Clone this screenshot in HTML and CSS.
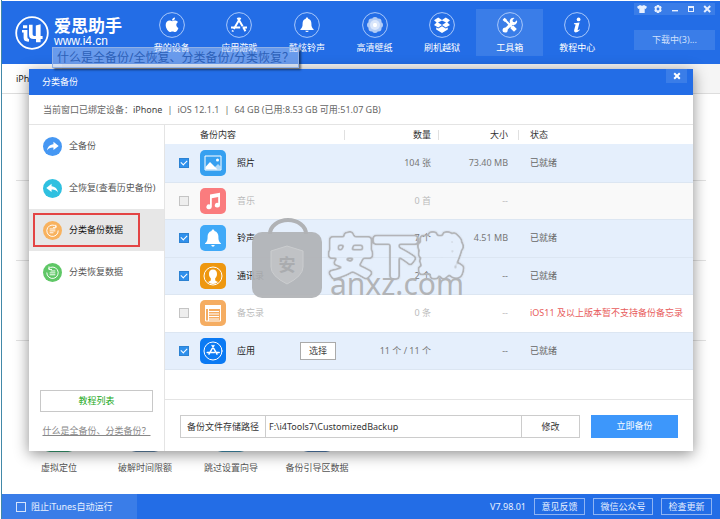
FILE: index.html
```html
<!DOCTYPE html>
<html lang="zh-CN">
<head>
<meta charset="utf-8">
<meta name="viewport" content="width=device-width, initial-scale=1">
<title>爱思助手</title>
<link rel="stylesheet" href="styles.css">
</head>
<body>
<div class="app">
  <header class="header">
    <div class="brand">
      <svg class="brand-logo" viewBox="0 0 34 34" aria-hidden="true">
        <circle cx="17" cy="17" r="15.8" fill="none" stroke="#fff" stroke-width="1.8"/>
        <path d="M8 9.2h4.2v3H8zM7 14h5.4v7.200q0 1.600 1.600 1.800v2.600q-5.400.4-5.400-3.800v-5.200H7z" fill="#fff"/>
        <path d="M14 8.800h3.600v9.400q0 1.800 1.800 1.800h1.400V9.600l4.800-1.400V20h2v3h-2v3.200h-4.600V23h-2.400q-4.600 0-4.600-4.600z" fill="#fff"/>
      </svg>
      <div class="brand-text">
        <strong>爱思助手</strong>
        <span>www.i4.cn</span>
      </div>
    </div>
    <nav class="nav">
      <a href="#device"><svg viewBox="0 0 26 26" aria-hidden="true"><circle class="ring" cx="13" cy="13" r="12.400"/><path d="M16 5.400c.2 1.700-1.300 3.300-3 3.200-.2-1.600 1.300-3.100 3-3.200zM19.400 16c-.6 1.800-1.900 4-3.300 4-1 0-1.500-.6-2.600-.6s-1.700.6-2.600.6c-1.700 0-4.200-3.900-4.200-7 0-2.800 1.800-4.400 3.700-4.400 1.100 0 2.100.7 2.800.7.800 0 1.900-.8 3.300-.7 1 .1 1.900.6 2.500 1.400-2.500 1.600-2 5 .4 6z"/></svg><span>我的设备</span></a>
      <a href="#apps"><svg viewBox="0 0 26 26" aria-hidden="true"><circle class="ring" cx="13" cy="13" r="12.400"/><path class="line" d="M14.400 5.800L7.800 17M11.600 5.800l5 8.400M17.400 15.600l2 3.600M5 15.600h9.200M16.600 15.600H21M7 18.400l-.6 1.200"/></svg><span>应用游戏</span></a>
      <a href="#ring"><svg viewBox="0 0 26 26" aria-hidden="true"><circle class="ring" cx="13" cy="13" r="12.400"/><path d="M13 5.600c.8 0 1.200.5 1.200 1.200 2.400.7 3.200 2.500 3.200 4.700 0 3.400.6 4.300 2.200 5.700v.8H6.400v-.8c1.600-1.400 2.200-2.300 2.200-5.700 0-2.200.8-4 3.200-4.700 0-.7.4-1.200 1.200-1.200zM11.200 18.700h3.600q-.4 1.300-1.800 1.300t-1.800-1.300z"/></svg><span>酷炫铃声</span></a>
      <a href="#wall"><svg viewBox="0 0 26 26" aria-hidden="true"><circle class="ring" cx="13" cy="13" r="12.400"/><g opacity=".65"><circle cx="13" cy="8" r="3"/><circle cx="16.500" cy="9.500" r="3"/><circle cx="18" cy="13" r="3"/><circle cx="16.500" cy="16.500" r="3"/><circle cx="13" cy="18" r="3"/><circle cx="9.500" cy="16.500" r="3"/><circle cx="8" cy="13" r="3"/><circle cx="9.500" cy="9.500" r="3"/></g><circle cx="13" cy="13" r="5" opacity=".5"/><circle cx="13" cy="13" r="2.200"/></svg><span>高清壁纸</span></a>
      <a href="#flash"><svg viewBox="0 0 26 26" aria-hidden="true"><circle class="ring" cx="13" cy="13" r="12.400"/><path d="M9.200 5.600L13 8l3.800-2.400L21 8.300l-2.600 2.300L21 12.900l-4.200 2.500L13 12.900l-3.800 2.500L5 12.900l2.600-2.300L5 8.300zM13 8.400l-4 2.200 4 2.400 4-2.400zM7.200 15.400l2 1.200L13 14.200l3.800 2.400 2-1.200v2.200L13 21l-5.800-3.400z" fill-rule="evenodd"/></svg><span>刷机越狱</span></a>
      <a href="#tools" class="current"><svg viewBox="0 0 26 26" aria-hidden="true"><circle class="ring" cx="13" cy="13" r="12.400"/><path class="thick" d="M14.600 14.600l3.800 3.800"/><path class="line" d="M6.800 6.800l8 8"/><path class="mid" d="M6.600 6.800l2.400 2.200M8 18.200l7.400-7.400"/><path d="M19.900 8.200a3.700 3.700 0 1 1-2.400-2.300l-2 2.100.4 1.800 1.800.5zM8.200 15.400a2.600 2.600 0 1 0 2.500 2.600l-1-1.800z"/></svg><span>工具箱</span></a>
      <a href="#help"><svg viewBox="0 0 26 26" aria-hidden="true"><circle class="ring" cx="13" cy="13" r="12.400"/><circle cx="14.600" cy="7.400" r="1.900"/><path d="M10 11.200l5.600-.7-1.900 7.100q-.2 1 .5.700l1.300-1 .4.700q-2 2.400-4.200 2.400-2-.1-1.600-2.100l1.400-5.200q.2-.9-.5-.9h-1.100z"/></svg><span>教程中心</span></a>
    </nav>
    <div class="header-side">
      <div class="window-tools">
        <button type="button" aria-label="皮肤"><svg viewBox="0 0 12 12"><path d="M4 2q2 1.400 4 0l3 1.700-1.200 2.300-1.100-.5V10H3.300V5.500L2.200 6 1 3.700z"/></svg></button>
        <button type="button" aria-label="设置"><svg viewBox="0 0 12 12"><path d="M6 2l1.100.1.500 1.100 1.200-.1.900 1.500-.7 1.400.7 1.400-.9 1.500-1.200-.1-.5 1.100H4.900l-.5-1.100-1.200.1-.9-1.500L3 6l-.7-1.400.9-1.500 1.200.1.500-1.100zM6 4.600a1.400 1.400 0 1 0 0 2.800 1.400 1.400 0 0 0 0-2.800z" fill-rule="evenodd"/></svg></button>
        <button type="button" aria-label="最小化"><svg viewBox="0 0 12 12"><path d="M3 7h6v1.400H3z"/></svg></button>
        <button type="button" aria-label="最大化"><svg viewBox="0 0 12 12"><path d="M3 3h6v6H3zm1 2v3h4V5z" fill-rule="evenodd"/></svg></button>
        <button type="button" aria-label="关闭"><svg viewBox="0 0 12 12"><path class="line" d="M3.200 3l6 6M9.200 3l-6 6"/></svg></button>
      </div>
      <button type="button" class="download">下载中(3)...</button>
    </div>
  </header>

  <main class="page">
    <div class="tabs"><a href="#iphone">iPhone</a></div>
    <div class="sections">
      <div class="section first"></div>
      <div class="section"></div>
      <div class="section"></div>
      <ul class="tools">
        <li><i class="tile green"></i>虚拟定位</li>
        <li><i class="tile steel"></i>破解时间限额</li>
        <li><i class="tile cyan"></i>跳过设置向导</li>
        <li><i class="tile blue"></i>备份引导区数据</li>
      </ul>
    </div>
  </main>

  <footer class="status">
    <label class="itunes"><input type="checkbox"> 阻止iTunes自动运行</label>
    <div class="status-end">
      <span>V7.98.01</span>
      <button type="button">意见反馈</button>
      <button type="button" class="wide">微信公众号</button>
      <button type="button">检查更新</button>
    </div>
  </footer>

  <section class="dialog" role="dialog" aria-labelledby="dialog-title">
    <div class="dialog-head">
      <h1 id="dialog-title">分类备份</h1>
      <button type="button" aria-label="关闭"><svg viewBox="0 0 12 12"><path class="line" d="M3.200 3.200l5.600 5.600M8.800 3.200L3.200 8.800"/></svg></button>
    </div>
    <p class="device">当前窗口已绑定设备：<b>iPhone</b><span>|</span>iOS 12.1.1<span>|</span>64 GB (已用:8.53 GB 可用:51.07 GB)</p>
    <div class="dialog-body">
      <aside class="side">
        <ul>
          <li><a href="#full-backup"><svg viewBox="0 0 20 20" aria-hidden="true"><circle cx="10" cy="10" r="10" fill="#4597f3"/><path d="M11 5l5.500 4.500L11 13.800v-2.600c-3-.2-5.200.8-6.700 3 .2-3.600 2.700-6.200 6.700-6.600z" fill="#fff"/></svg>全备份</a></li>
          <li><a href="#full-restore"><svg viewBox="0 0 20 20" aria-hidden="true"><circle cx="10" cy="10" r="10" fill="#2fc0e0"/><path d="M9 5L3.500 9.500 9 13.800v-2.600c3-.2 5.200.8 6.700 3-.2-3.600-2.700-6.200-6.700-6.600z" fill="#fff"/></svg>全恢复(查看历史备份)</a></li>
          <li class="selected"><a href="#sort-backup"><svg viewBox="0 0 20 20" aria-hidden="true"><circle cx="10" cy="10" r="10" fill="#f8b25e"/><path d="M14.500 6.300A6 6 0 1 0 16 10M13.500 4v3h-3M7 8.400h6M7 10.400h6M7 12.400h4" fill="none" stroke="#fff"/></svg>分类备份数据</a></li>
          <li><a href="#sort-restore"><svg viewBox="0 0 20 20" aria-hidden="true"><circle cx="10" cy="10" r="10" fill="#5fc766"/><path d="M5.500 6.300A6 6 0 1 1 4 10M6.300 3.600v3.200h3.200M8 8.400h5M7 10.400h6M7 12.400h6" fill="none" stroke="#fff"/></svg>分类恢复数据</a></li>
        </ul>
        <div class="side-end">
          <button type="button">教程列表</button>
          <a href="#what">什么是全备份、分类备份？</a>
        </div>
      </aside>
      <div class="content">
        <table>
          <colgroup><col class="c-check"><col class="c-name"><col class="c-count"><col class="c-size"><col></colgroup>
          <thead>
            <tr><th></th><th class="h-name">备份内容</th><th class="num">数量</th><th class="num size">大小</th><th class="state">状态</th></tr>
          </thead>
          <tbody>
            <tr class="on">
              <td class="check"><input type="checkbox" id="r1" checked></td>
              <td><div class="item"><svg viewBox="0 0 26 26" aria-hidden="true"><rect width="26" height="26" rx="5" fill="#36a0f0"/><path d="M5 6h16v14H5z" fill="none" stroke="#fff"/><circle cx="17.500" cy="10" r="1.500" fill="#fff"/><path d="M15 17l3-3 2.500 2.500v3H15z" fill="#fff" opacity=".6"/><path d="M5.500 17L10 12l7.500 7.500h-12z" fill="#fff"/></svg><label for="r1">照片</label></div></td>
              <td class="num">104 张</td><td class="num size">73.40 MB</td><td class="state">已就绪</td>
            </tr>
            <tr class="off muted">
              <td class="check"><input type="checkbox" id="r2" disabled></td>
              <td><div class="item"><svg viewBox="0 0 26 26" aria-hidden="true"><rect width="26" height="26" rx="5" fill="#fa7c7e"/><path d="M10 6.600l10-1.800v12.400a2.600 2.400 0 1 1-1.800-2.300V9l-6.400 1.200v8.600A2.700 2.400 0 1 1 10 16.500z" fill="#fff"/></svg><label for="r2">音乐</label></div></td>
              <td class="num">0 首</td><td class="num size">--</td><td></td>
            </tr>
            <tr class="on">
              <td class="check"><input type="checkbox" id="r3" checked></td>
              <td><div class="item"><svg viewBox="0 0 26 26" aria-hidden="true"><rect width="26" height="26" rx="5" fill="#3fa9f8"/><path d="M13 4.500c.9 0 1.400.6 1.400 1.400 2.900.8 4 3 4 5.600 0 4 .6 5.300 2.600 7v.5H5v-.5c2-1.700 2.600-3 2.600-7 0-2.600 1.100-4.800 4-5.600 0-.8.5-1.400 1.400-1.400zM11.200 20h3.600q-.4 1.800-1.800 1.800T11.200 20z" fill="#fff"/></svg><label for="r3">铃声</label></div></td>
              <td class="num">7 个</td><td class="num size">4.51 MB</td><td class="state">已就绪</td>
            </tr>
            <tr class="on">
              <td class="check"><input type="checkbox" id="r4" checked></td>
              <td><div class="item"><svg viewBox="0 0 26 26" aria-hidden="true"><rect width="26" height="26" rx="5" fill="#ee970f"/><circle cx="13" cy="13" r="9" fill="none" stroke="#fff"/><path d="M13 6.500c2.600 0 4 1.700 4 4.500 0 2-.8 3.500-1.800 4.300v1.800c.1 1.200 1.500 1.300 2.800 2-2.800 2.600-7.200 2.600-10 0 1.300-.7 2.700-.8 2.800-2v-1.800C9.800 14.500 9 13 9 11c0-2.800 1.400-4.500 4-4.500z" fill="#fff"/></svg><label for="r4">通讯录</label></div></td>
              <td class="num">2 个</td><td class="num size">--</td><td class="state">已就绪</td>
            </tr>
            <tr class="muted">
              <td class="check"><input type="checkbox" id="r5" disabled></td>
              <td><div class="item"><svg viewBox="0 0 26 26" aria-hidden="true"><rect width="26" height="26" rx="5" fill="#f5ad62"/><path d="M5.500 5.500h15v15.500h-15z" fill="none" stroke="#fff"/><path d="M5 5h16v4H5z" fill="#fff"/><path d="M8.500 9v12M8 11.500h11M8 14h11M8 16.500h11M8 19h11" stroke="#fff" fill="none"/></svg><label for="r5">备忘录</label></div></td>
              <td class="num">0 条</td><td class="num size">--</td><td class="state warn">iOS11 及以上版本暂不支持备份备忘录</td>
            </tr>
            <tr class="on">
              <td class="check"><input type="checkbox" id="r6" checked></td>
              <td><div class="item"><svg viewBox="0 0 26 26" aria-hidden="true"><rect width="26" height="26" rx="5" fill="#0b7af3"/><g fill="none" stroke="#fff" stroke-linecap="round"><circle cx="13" cy="13" r="9"/><path stroke-width="1.500" d="M13.900 7.500L9 16.200M12.100 7.500l4.900 8.700M7.200 14.500h7.200M16.400 14.500h2.800"/></g></svg><label for="r6">应用</label><button type="button">选择</button></div></td>
              <td class="num">11 个 / 11 个</td><td class="num size">--</td><td class="state">已就绪</td>
            </tr>
          </tbody>
        </table>
        <form class="save">
          <div class="path">
            <label for="path">备份文件存储路径</label>
            <input id="path" type="text" value="F:\i4Tools7\CustomizedBackup">
            <button type="button">修改</button>
          </div>
          <button type="button" class="primary">立即备份</button>
        </form>
      </div>
    </div>
  </section>

  <div class="tip" role="tooltip">什么是全备份/全恢复、分类备份/分类恢复？</div>

  <svg class="watermark" viewBox="0 0 216 84">
    <defs>
      <filter id="outline" x="-5%" y="-10%" width="110%" height="120%">
        <feGaussianBlur stdDeviation="1"/>
        <feComponentTransfer>
          <feFuncA type="table" tableValues="0 .3 1 1 .9 .4 0 0"/>
        </feComponentTransfer>
      </filter>
    </defs>
    <path d="M18 16a18 14 0 0 1 36 0" fill="none" stroke="#b0b2b5" stroke-width="4"/>
    <rect x="0" y="14" width="70" height="66" rx="10" fill="#b0b2b5" opacity=".92"/>
    <path d="M35 28l16 5v16q0 9-16 17-16-8-16-17V33z" fill="#c0c2c5" stroke="#cbcdcf"/>
    <text class="mark-badge" x="35" y="53" text-anchor="middle">安</text>
    <text class="mark-name" x="76" y="55" filter="url(#outline)">安下载</text>
    <text class="mark-site" x="78" y="77">anxz.com</text>
  </svg>
</div>
</body>
</html>
```
FILE: styles.css
```css
* {
  box-sizing: border-box;
}

body {
  margin: 0;
  background: #fff;
  color: #555;
  font: 9px/12px "Noto Sans", "Noto Sans CJK SC", sans-serif;
}

button,
input {
  margin: 0;
  padding: 0;
  border: 0;
  background: none;
  color: inherit;
  font: inherit;
}

a {
  color: inherit;
  text-decoration: none;
}

ul {
  margin: 0;
  padding: 0;
  list-style: none;
}

svg {
  display: block;
  flex: none;
}

.app {
  position: relative;
  display: flex;
  flex-direction: column;
  min-height: 100vh;
  margin-left: 1px;
  padding-top: 1px;
  border-left: 1px solid #4288a8;
}

/* Header */

.header {
  display: flex;
  height: 63px;
  background: #236de6;
  color: #fff;
}

.brand {
  display: flex;
  align-items: center;
  gap: 5px;
  width: 136px;
  padding-left: 13px;
}

.brand-logo {
  width: 34px;
}

.brand-text {
  display: flex;
  flex-direction: column;
}

.brand-text strong {
  font-size: 17px;
  font-weight: 700;
  line-height: 17px;
}

.brand-text span {
  font: 12px/14px "Liberation Sans", sans-serif;
}

.nav {
  display: flex;
  flex: 1;
  padding: 8px 0;
}

.nav a {
  display: flex;
  flex: 1;
  flex-direction: column;
  align-items: center;
  gap: 4px;
  padding-top: 3px;
}

.nav a.current {
  background: #3a7de8;
}

.nav svg {
  width: 26px;
  fill: #fff;
}

.nav .ring {
  fill: none;
  stroke: #a9c8fa;
}

.line,
.mid,
.thick {
  fill: none;
  stroke: #fff;
  stroke-width: 2;
}

.nav .mid {
  stroke-width: 3;
}

.nav .thick {
  stroke-width: 4;
}

.header-side {
  display: flex;
  flex-direction: column;
  gap: 15px;
  width: 109px;
  padding: 2px 5px 0 23px;
}

.window-tools {
  display: flex;
  justify-content: space-between;
  background: #3a7de8;
}

.window-tools button {
  flex: 1;
  height: 12px;
}

.window-tools svg {
  width: 12px;
  margin: 0 auto;
  fill: #e6efff;
}

.window-tools .line {
  fill: none;
  stroke: #e6efff;
  stroke-width: 2;
}

.download {
  height: 20px;
  background: #3a7de8;
  color: #d0e0fc;
}

/* Page behind the dialog */

.page {
  flex: 1;
}

.tabs {
  height: 30px;
  padding: 9px 14px;
  border-bottom: 1px solid #ddd;
  background: linear-gradient(90deg, #fff 60px, #f5f5f5 60px);
  color: #222;
}

.sections {
  padding: 0 14px;
}

.section {
  height: 80px;
  border-bottom: 1px solid #e2e2e2;
}

.section.first {
  height: 87px;
}

.tools {
  display: flex;
  padding-top: 75px;
}

.tools li {
  display: flex;
  flex-direction: column;
  align-items: center;
  gap: 10px;
  width: 86px;
  white-space: nowrap;
}

.tile {
  width: 36px;
  height: 36px;
  border-radius: 9px;
}

.green { background: #3aa377; }
.steel { background: #6288ac; }
.cyan { background: #4696b8; }
.blue { background: #5482b4; }

/* Status bar */

.status {
  display: flex;
  justify-content: space-between;
  height: 25px;
  background: #236de6;
  color: #e8f0ff;
}

.itunes {
  display: flex;
  align-items: center;
  gap: 5px;
  width: 135px;
  padding-left: 14px;
  background: #3a7de8;
}

.itunes input {
  width: 10px;
  height: 10px;
  border: 1px solid #d5e3fc;
  appearance: none;
}

.status-end {
  display: flex;
  align-items: center;
  gap: 8px;
  padding-right: 8px;
}

.status-end button {
  width: 51px;
  height: 17px;
  border: 1px solid #8fb4f3;
}

.status-end .wide {
  width: 60px;
}

/* Dialog */

.dialog {
  position: absolute;
  top: 69px;
  right: 27px;
  left: 27px;
  background: #fff;
  box-shadow: 0 3px 14px rgb(0 0 0 / 45%);
}

.dialog-head {
  display: flex;
  justify-content: space-between;
  height: 26px;
  padding: 0 6px 0 13px;
  background: #236de6;
  color: #fff;
}

.dialog-head h1 {
  margin: 0;
  font-size: 9px;
  font-weight: 400;
  line-height: 26px;
}

.dialog-head button {
  width: 21px;
  height: 14px;
  background: #3a7de8;
}

.dialog-head svg {
  width: 12px;
  margin: 0 auto;
}

.device {
  margin: 0;
  padding: 9px 14px 8px;
  border-bottom: 1px solid #e4e4e4;
  color: #666;
}

.device b {
  color: #444;
  font-weight: 400;
}

.device span {
  margin: 0 5px;
}

.dialog-body {
  display: flex;
}

.side {
  display: flex;
  flex-direction: column;
  justify-content: space-between;
  width: 136px;
  border-right: 1px solid #e4e4e4;
}

.side li {
  display: flex;
  height: 42px;
}

.side li a {
  display: flex;
  flex: 1;
  align-items: center;
  gap: 7px;
  padding-left: 14px;
  white-space: nowrap;
}

.side li svg {
  width: 19px;
}

.side .selected {
  padding: 4px 24px 4px 4px;
  background: #e7e7e7;
  color: #111;
}

.side .selected a {
  padding-left: 8px;
  border: 2px solid #e34444;
}

.side-end {
  display: flex;
  flex-direction: column;
  gap: 13px;
  padding: 0 11px 14px;
  color: #888;
}

.side-end button {
  height: 22px;
  border: 1px solid #c8c8c8;
  color: #18a818;
}

.side-end a {
  align-self: center;
  text-decoration: underline;
  white-space: nowrap;
}

.content {
  flex: 1;
}

table {
  width: 100%;
  border-collapse: collapse;
  table-layout: fixed;
}

th,
td {
  padding: 0;
  font-weight: 400;
  text-align: left;
  white-space: nowrap;
}

th {
  height: 19px;
  color: #333;
}

.c-check { width: 35px; }
.c-name { width: 145px; }
.c-count { width: 94px; }
.c-size { width: 80px; }

thead th:nth-child(n+2):nth-child(-n+4) {
  background: linear-gradient(#e0e0e0, #e0e0e0) right center / 1px 10px no-repeat;
}

tbody tr {
  height: 38px;
  border-bottom: 1px solid #dce6f2;
  color: #777;
}

tbody tr:nth-child(even) {
  height: 37px;
}

.on {
  background: #e5effc;
}

.off {
  background: #f9f9f9;
}

.on label {
  color: #222;
}

.on .state {
  color: #666;
}

tbody .muted {
  color: #bbb;
}

.num {
  padding-right: 8px;
  text-align: right;
}

.size {
  padding-right: 11px;
}

.state {
  padding-left: 11px;
}

.muted .warn {
  color: #e85c5c;
}

.check input {
  display: block;
  width: 10px;
  height: 10px;
  margin-left: 14px;
  border: 1px solid #c4c4c4;
  background: #eee;
  appearance: none;
}

.check input:checked {
  border-color: #2c82d2;
  background: #2f90ec;
}

.check input:checked::after {
  display: block;
  width: 5px;
  height: 3px;
  margin: 1px;
  border: solid #fff;
  border-width: 0 0 1px 1px;
  content: "";
  transform: rotate(-45deg);
}

.item {
  display: flex;
  align-items: center;
  gap: 11px;
}

.item svg {
  width: 26px;
}

.item button {
  width: 36px;
  height: 18px;
  margin-left: auto;
  margin-right: 9px;
  border: 1px solid #aaa;
  background: #fff;
  color: #444;
}

.save {
  display: flex;
  gap: 11px;
  margin-top: 29px;
  padding: 15px 15px 13px;
  border-top: 1px solid #e4e4e4;
}

.path {
  display: flex;
  flex: 1;
  height: 23px;
  border: 1px solid #ccc;
  color: #333;
  line-height: 21px;
}

.path label {
  width: 85px;
  border-right: 1px solid #ccc;
  text-align: center;
}

.path input {
  flex: 1;
  min-width: 0;
  padding: 0 3px;
}

.path button {
  width: 58px;
  border-left: 1px solid #ccc;
}

.primary {
  width: 87px;
  height: 23px;
  background: #3d97fb;
  color: #fff;
}

/* Layers above the dialog */

.tip {
  position: absolute;
  top: 47px;
  left: 50px;
  padding: 0 4px;
  border: 1px solid #8fb0e6;
  background: rgb(190 210 245 / 45%);
  box-shadow: 2px 2px 2px rgb(0 0 0 / 50%);
  color: #2c60b8;
  font-size: 12px;
  line-height: 19px;
  white-space: nowrap;
}

.watermark {
  position: absolute;
  top: 218px;
  left: 250px;
  width: 216px;
  overflow: visible;
  pointer-events: none;
}

.mark-badge {
  fill: #aaacaf;
  font: 700 17px "Noto Sans CJK SC", sans-serif;
}

.mark-name {
  fill: #b2b4b7;
  stroke: #b2b4b7;
  stroke-width: 4px;
  stroke-linejoin: round;
  font: 500 45px "Noto Sans CJK SC", sans-serif;
}

.mark-site {
  fill: #b2b4b7;
  font: 30px "Noto Sans", sans-serif;
}
```
